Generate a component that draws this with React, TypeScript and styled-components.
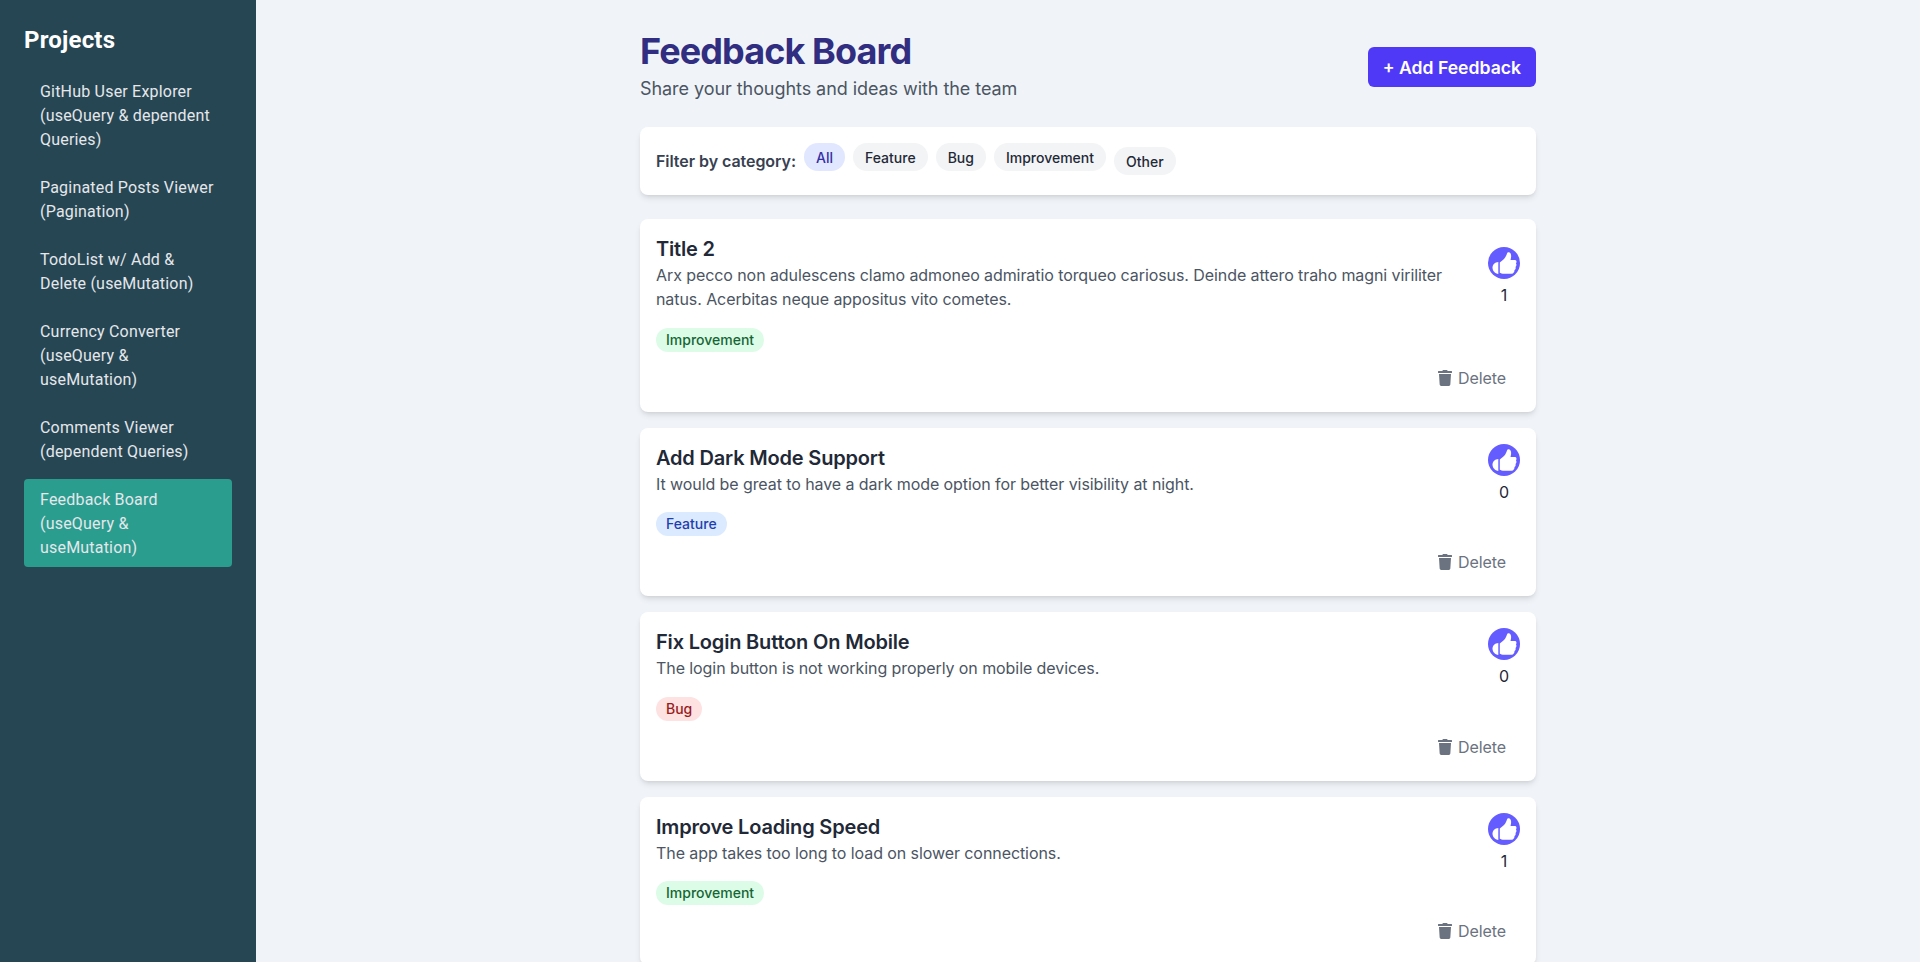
import React from 'react';
import styled, {createGlobalStyle} from 'styled-components';
import {FaTrash} from 'react-icons/fa';

type Category = 'Feature' | 'Bug' | 'Improvement';

const tagColors: Record<Category, {bg: string; fg: string}> = {
  Feature: {bg: '#dbeafe', fg: '#1e40af'},
  Bug: {bg: '#fee2e2', fg: '#991b1b'},
  Improvement: {bg: '#dcfce7', fg: '#166534'},
};

const projects = [
  'GitHub User Explorer (useQuery & dependent Queries)',
  'Paginated Posts Viewer (Pagination)',
  'TodoList w/ Add & Delete (useMutation)',
  'Currency Converter (useQuery & useMutation)',
  'Comments Viewer (dependent Queries)',
  'Feedback Board (useQuery & useMutation)',
];

const filters = ['All', 'Feature', 'Bug', 'Improvement', 'Other'];

const feedback: {title: string; text: string; tag: Category; votes: number}[] = [
  {
    title: 'Title 2',
    text: 'Arx pecco non adulescens clamo admoneo admiratio torqueo cariosus. Deinde attero traho magni viriliter natus. Acerbitas neque appositus vito cometes.',
    tag: 'Improvement',
    votes: 1,
  },
  {
    title: 'Add Dark Mode Support',
    text: 'It would be great to have a dark mode option for better visibility at night.',
    tag: 'Feature',
    votes: 0,
  },
  {
    title: 'Fix Login Button On Mobile',
    text: 'The login button is not working properly on mobile devices.',
    tag: 'Bug',
    votes: 0,
  },
  {
    title: 'Improve Loading Speed',
    text: 'The app takes too long to load on slower connections.',
    tag: 'Improvement',
    votes: 1,
  },
];

const GlobalStyle = createGlobalStyle`
  html, body {
    margin: 0;
    height: 100%;
    overflow: hidden;
  }
  body {
    font-family: Inter, "Liberation Sans", sans-serif;
    background: #f0f4f8;
  }
  * {
    box-sizing: border-box;
  }
`;

const Layout = styled.div`
  display: flex;
  height: 962px;
  overflow: hidden;
`;

const Sidebar = styled.nav`
  flex: 0 0 256px;
  background: #264653;
  padding: 24px;
  font-family: Roboto, "Noto Sans", sans-serif;
  color: #fff;
`;

const SidebarTitle = styled.h2`
  margin: 0 0 15px;
  font-size: 24px;
  line-height: 32px;
  font-weight: 700;
  letter-spacing: 0.2px;
`;

const ProjectList = styled.ul`
  list-style: none;
  margin: 0;
  padding: 0;
  display: flex;
  flex-direction: column;
  gap: 8px;
`;

const ProjectItem = styled.li<{$active?: boolean}>`
  padding: 9px 16px 7px;
  border-radius: 4px;
  font-size: 16px;
  line-height: 24px;
  letter-spacing: 0.2px;
  color: #e5e7eb;
  background: ${(p) => (p.$active ? '#2a9d8f' : 'transparent')};
`;

const Main = styled.main`
  flex: 1;
  padding: 32px 16px;
`;

const Content = styled.div`
  width: 896px;
  margin: 0 auto;
`;

const Header = styled.header`
  display: flex;
  justify-content: space-between;
  align-items: center;
  margin-bottom: 24px;
`;

const Title = styled.h1`
  margin: 0;
  font-size: 36px;
  line-height: 38px;
  font-weight: 700;
  letter-spacing: -0.9px;
  color: #312e81;
`;

const Subtitle = styled.p`
  margin: 5px 0 0;
  font-size: 18px;
  line-height: 28px;
  letter-spacing: -0.06px;
  color: #4b5563;
`;

const AddButton = styled.button`
  height: 40px;
  margin-bottom: 1px;
  padding: 0 15px;
  border: 0;
  border-radius: 6px;
  background: #4f39f6;
  color: #fff;
  font-family: inherit;
  font-size: 17.6px;
  font-weight: 600;
`;

const FilterBox = styled.section`
  display: flex;
  flex-wrap: wrap;
  gap: 8px;
  padding: 16px;
  margin-bottom: 24px;
  background: #fff;
  border-radius: 8px;
  box-shadow: 0 4px 6px -1px rgba(0, 0, 0, 0.1), 0 2px 4px -2px rgba(0, 0, 0, 0.1);
`;

const FilterLabel = styled.span`
  height: 36px;
  line-height: 36px;
  font-size: 16px;
  font-weight: 600;
  letter-spacing: -0.05px;
  color: #374151;
`;

const Chip = styled.span<{$active?: boolean; $drop?: boolean}>`
  height: 28px;
  padding: 0 12px;
  border-radius: 9999px;
  font-size: 14px;
  line-height: 30px;
  font-weight: 500;
  margin-top: ${(p) => (p.$drop ? '4px' : '0')};
  background: ${(p) => (p.$active ? '#e0e7ff' : '#f3f4f6')};
  color: ${(p) => (p.$active ? '#3730a3' : '#1f2937')};
`;

const Cards = styled.div`
  display: flex;
  flex-direction: column;
  gap: 16px;
`;

const Card = styled.article`
  padding: 16px;
  background: #fff;
  border-radius: 8px;
  box-shadow: 0 4px 6px -1px rgba(0, 0, 0, 0.1), 0 2px 4px -2px rgba(0, 0, 0, 0.1);
`;

const CardTop = styled.div`
  display: flex;
  justify-content: space-between;
  align-items: center;
  gap: 16px;
`;

const CardTitle = styled.h3`
  margin: 0;
  font-size: 20px;
  line-height: 28px;
  font-weight: 600;
  letter-spacing: -0.18px;
  color: #1f2937;
`;

const CardText = styled.p`
  margin: 0 0 8px;
  font-size: 16px;
  line-height: 24px;
  letter-spacing: -0.08px;
  color: #4b5563;
`;

const Vote = styled.div`
  flex: 0 0 32px;
  display: flex;
  flex-direction: column;
  align-items: center;
  gap: 4px;
`;

const VoteCircle = styled.span`
  width: 32px;
  height: 32px;
  border-radius: 50%;
  background: #645cff;
  display: block;
  svg {
    display: block;
  }
`;

const VoteCount = styled.span`
  font-size: 16px;
  line-height: 24px;
  color: #1f2937;
`;

const Tag = styled.span<{$kind: Category}>`
  display: block;
  width: fit-content;
  margin-top: 8.6px;
  padding: 0 10px;
  height: 24px;
  border-radius: 9999px;
  font-size: 14px;
  line-height: 24px;
  font-weight: 500;
  background: ${(p) => tagColors[p.$kind].bg};
  color: ${(p) => tagColors[p.$kind].fg};
`;

const CardFooter = styled.div`
  display: flex;
  justify-content: flex-end;
  margin-top: 8px;
`;

const DeleteButton = styled.button`
  display: flex;
  align-items: center;
  gap: 5px;
  height: 36px;
  padding: 0 14px;
  border: 0;
  background: transparent;
  font-family: inherit;
  font-size: 16px;
  letter-spacing: -0.08px;
  color: #6b7280;
`;

const ThumbIcon: React.FunctionComponent = () => (
  <svg width="32" height="32" viewBox="0 0 32 32" fill="#fff">
    <path d="M10.3 15C7 15.2 4.5 17.5 4.5 20.7C4.5 23.7 7 26.5 10.3 27Z" />
    <path d="M11.8 15.5L16 12C17.5 10.5 18.5 8 19 6.5C19.3 5.5 20.5 5 21.5 5.5C23.5 6.5 23.5 10 22.5 13L27 13C28.5 13 29 15 28 16.5C28.8 17.5 28.5 19 27.5 20C28 21 27.5 22.5 26.5 23C26.5 25 25.5 26.7 23.5 26.7L16 26.7C14 26.7 12.8 26.2 11.8 25.7Z" />
  </svg>
);

const App: React.FunctionComponent = () => (
  <Layout>
    <GlobalStyle />
    <Sidebar>
      <SidebarTitle>Projects</SidebarTitle>
      <ProjectList>
        {projects.map((name, i) => (
          <ProjectItem key={name} $active={i === projects.length - 1}>{name}</ProjectItem>
        ))}
      </ProjectList>
    </Sidebar>
    <Main>
      <Content>
        <Header>
          <div>
            <Title>Feedback Board</Title>
            <Subtitle>Share your thoughts and ideas with the team</Subtitle>
          </div>
          <AddButton>+ Add Feedback</AddButton>
        </Header>
        <FilterBox>
          <FilterLabel>Filter by category:</FilterLabel>
          {filters.map((f, i) => (
            <Chip key={f} $active={i === 0} $drop={f === 'Other'}>{f}</Chip>
          ))}
        </FilterBox>
        <Cards>
          {feedback.map((item) => (
            <Card key={item.title}>
              <CardTop>
                <div>
                  <CardTitle>{item.title}</CardTitle>
                  <CardText>{item.text}</CardText>
                </div>
                <Vote>
                  <VoteCircle><ThumbIcon /></VoteCircle>
                  <VoteCount>{item.votes}</VoteCount>
                </Vote>
              </CardTop>
              <Tag $kind={item.tag}>{item.tag}</Tag>
              <CardFooter>
                <DeleteButton><FaTrash size={16} />Delete</DeleteButton>
              </CardFooter>
            </Card>
          ))}
        </Cards>
      </Content>
    </Main>
  </Layout>
);

export default App;
